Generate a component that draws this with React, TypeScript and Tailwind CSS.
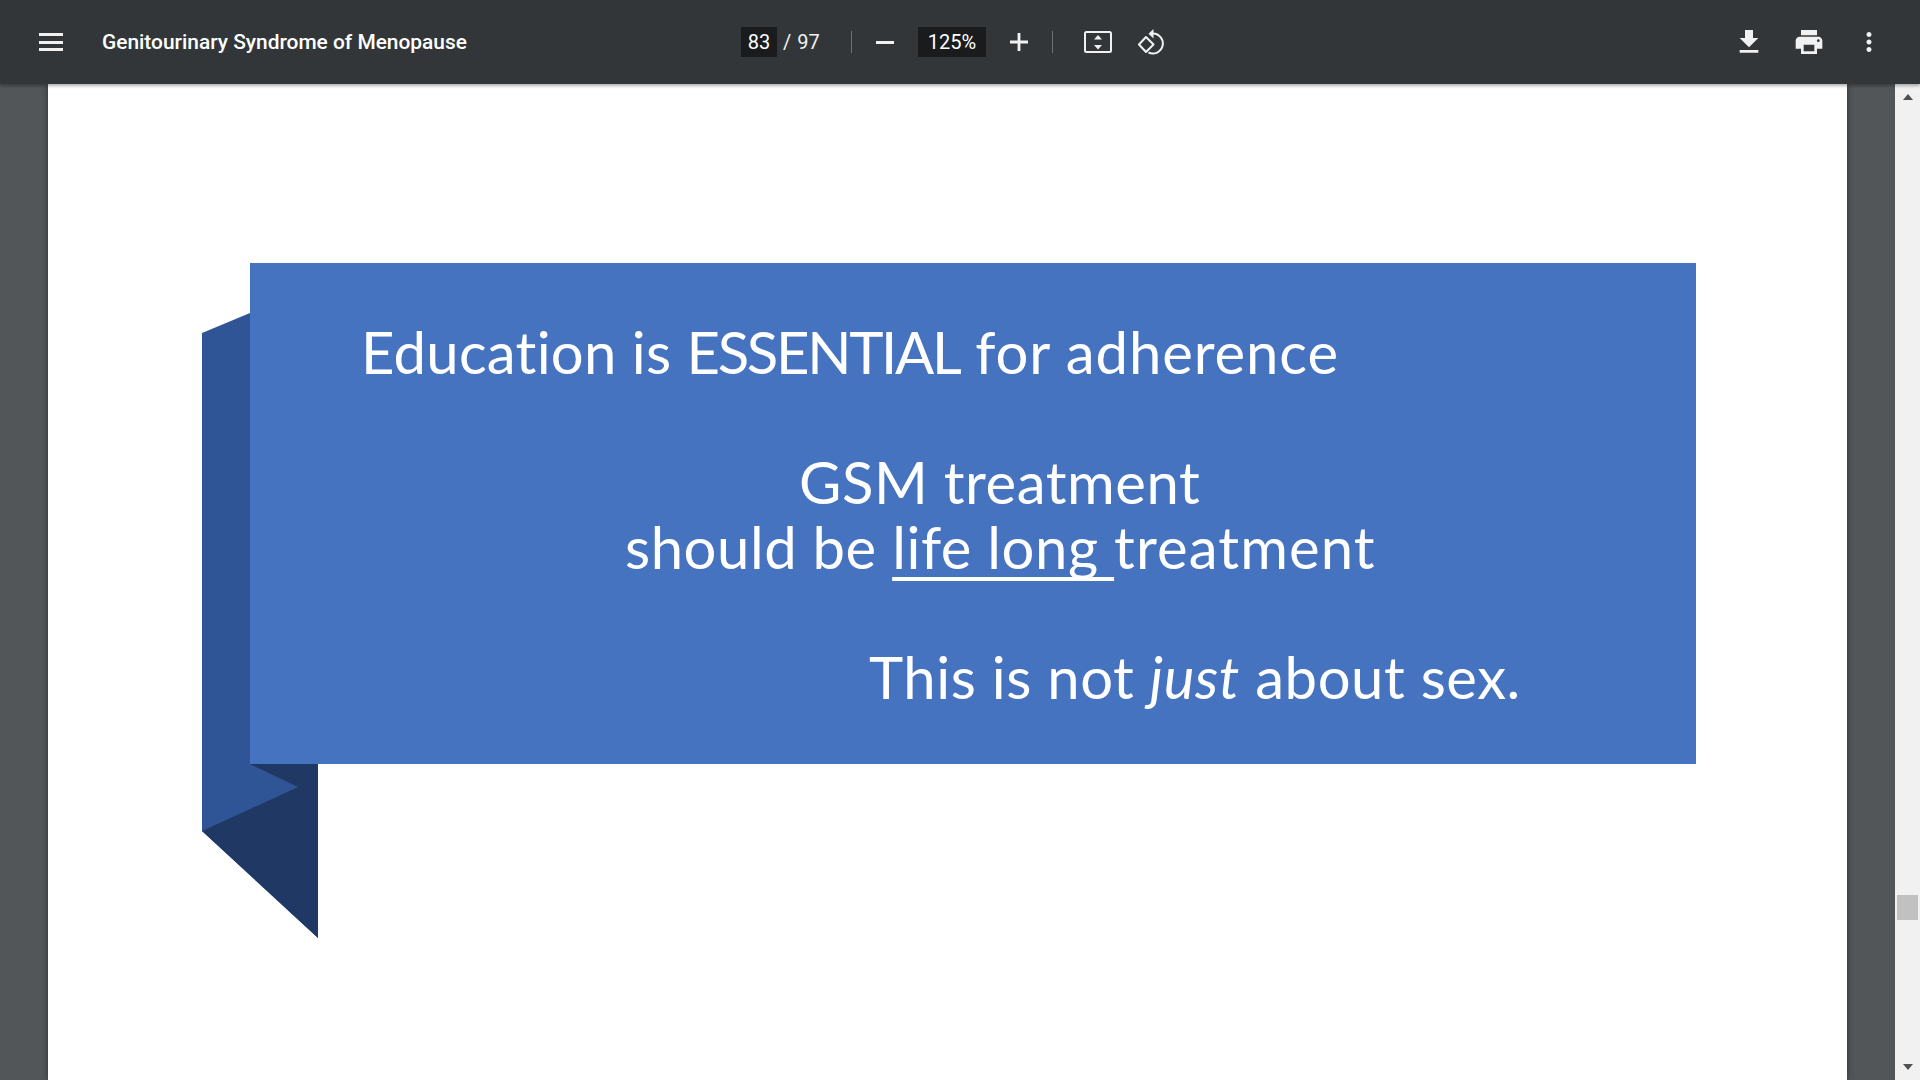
import React from 'react';

function Separator() {
  return <div className="h-[22px] w-px bg-[#6d7073]" />;
}

function Icon({ d, className }: { d: string; className: string }) {
  return (
    <svg viewBox="0 0 24 24" fill="currentColor" className={className}>
      <path d={d} />
    </svg>
  );
}

function Toolbar() {
  return (
    <header className="relative z-10 flex h-[84px] shrink-0 items-center bg-[#323639] text-[#f1f1f1] shadow-[0_2px_3px_rgba(0,0,0,0.3)] font-['Roboto',sans-serif]">
      <div className="ml-[39px] flex h-[18px] w-6 flex-col justify-between">
        <div className="h-[3px] bg-[#f1f1f1]" />
        <div className="h-[3px] bg-[#f1f1f1]" />
        <div className="h-[3px] bg-[#f1f1f1]" />
      </div>
      <div className="ml-[39px] mt-px w-[639px] text-[20.9px] font-medium text-white">Genitourinary Syndrome of Menopause</div>

      <div className="flex h-[30px] w-9 items-center justify-center bg-[#191b1c] text-[20px] text-white">83</div>
      <div className="ml-[6px] flex w-[68px] gap-[6px] text-[20px]">
        <span>/</span>
        <span>97</span>
      </div>
      <Separator />
      <div className="ml-6 h-[3px] w-[18px] bg-[#f1f1f1]" />
      <div className="ml-6 flex h-[30px] w-[68px] items-center justify-center bg-[#191b1c] text-[20px] text-white">125%</div>
      <svg viewBox="0 0 18 18" className="ml-6 h-[18px] w-[18px]" fill="#f1f1f1">
        <path d="M7.6 0h2.8v7.6H18v2.8h-7.6V18H7.6v-7.6H0V7.6h7.6z" />
      </svg>
      <div className="ml-6"><Separator /></div>

      <svg viewBox="0 0 28 22" className="ml-[31px] h-[22px] w-7" fill="none">
        <rect x="1" y="1" width="26" height="20" rx="1.5" stroke="#f1f1f1" strokeWidth="2" />
        <path d="M14 4l4 4.5h-8zM14 18.5l-4-4.5h8z" fill="#f1f1f1" />
      </svg>
      <svg viewBox="0 0 27 26" className="ml-[26px] h-[26px] w-[27px]" fill="none" stroke="#f1f1f1" strokeWidth="2">
        <path d="M8 8l7.5 7.5L8 23 1 15.5z" strokeLinejoin="round" />
        <path d="M15 4.5a10 10 0 1 1-4.5 19" />
        <path d="M15.5 0v9.5L10.5 4.8z" fill="#f1f1f1" stroke="none" />
      </svg>

      <Icon
        d="M19 9h-4V3H9v6H5l7 7 7-7zM5 18v2h14v-2H5z"
        className="ml-[568px] h-[32px] w-[32px]"
      />
      <Icon
        d="M19 8H5c-1.66 0-3 1.34-3 3v6h4v4h12v-4h4v-6c0-1.66-1.34-3-3-3zm-3 11H8v-5h8v5zm3-7c-.55 0-1-.45-1-1s.45-1 1-1 1 .45 1 1-.45 1-1 1zm-1-9H6v4h12V3z"
        className="ml-[28px] h-[32px] w-[32px]"
      />
      <Icon
        d="M12 8c1.1 0 2-.9 2-2s-.9-2-2-2-2 .9-2 2 .9 2 2 2zm0 2c-1.1 0-2 .9-2 2s.9 2 2 2 2-.9 2-2-.9-2-2-2zm0 6c-1.1 0-2 .9-2 2s.9 2 2 2 2-.9 2-2-.9-2-2-2z"
        className="ml-[29px] h-[30px] w-[30px]"
      />
    </header>
  );
}

function Slide() {
  return (
    <div className="relative ml-[154px] mr-[151px] pl-[48px] font-['Lato',sans-serif] text-[58px] font-normal leading-[65px] tracking-[0.55px] text-white [font-variant-ligatures:none]">
      <svg viewBox="0 0 116 625" className="absolute left-0 top-[50px] h-[625px] w-[116px]">
        <path d="M0 20L48 0V451H116V625L0 518z" fill="#2f5597" />
        <path d="M48 451H116V625L0 518L96 474z" fill="#203864" />
      </svg>
      <div className="relative h-[501px] bg-[#4673c0] pt-[56px]">
        <div className="pl-[111px]">
          <span className="tracking-[0.27px]">Education is </span>
          <span className="tracking-[-2.3px]">ESSENTIAL</span>
          <span className="tracking-[0.9px]"> for adherence</span>
        </div>
        <div className="mt-[65px] pl-[549px]">GSM treatment</div>
        <div className="pl-[375px]">
          should be <span className="underline decoration-[4px] underline-offset-[8px] [text-decoration-skip-ink:none]">life long </span>
          <span className="tracking-[1.1px]">treatment</span>
        </div>
        <div className="mt-[65px] pl-[619px]">
          This is not <em>just</em> about sex.
        </div>
      </div>
    </div>
  );
}

function Scrollbar() {
  return (
    <aside className="flex w-[25px] shrink-0 flex-col items-center bg-[#f1f1f1]">
      <div className="mt-[10px] h-0 w-0 border-x-[5.5px] border-b-[6px] border-x-transparent border-b-[#505050]" />
      <div className="mt-[795px] h-[25px] w-[21px] bg-[#c1c1c1]" />
      <div className="mt-[144px] h-0 w-0 border-x-[5.5px] border-t-[6px] border-x-transparent border-t-[#505050]" />
    </aside>
  );
}

export default function App() {
  return (
    <div className="flex h-screen w-full flex-col overflow-hidden bg-[#525659]">
      <Toolbar />
      <div className="flex min-h-0 flex-1">
        <main className="min-w-0 flex-1 px-[48px]">
          <div className="h-full bg-white pt-[179px] shadow-[0_0_6px_rgba(0,0,0,0.45)]">
            <Slide />
          </div>
        </main>
        <Scrollbar />
      </div>
    </div>
  );
}
